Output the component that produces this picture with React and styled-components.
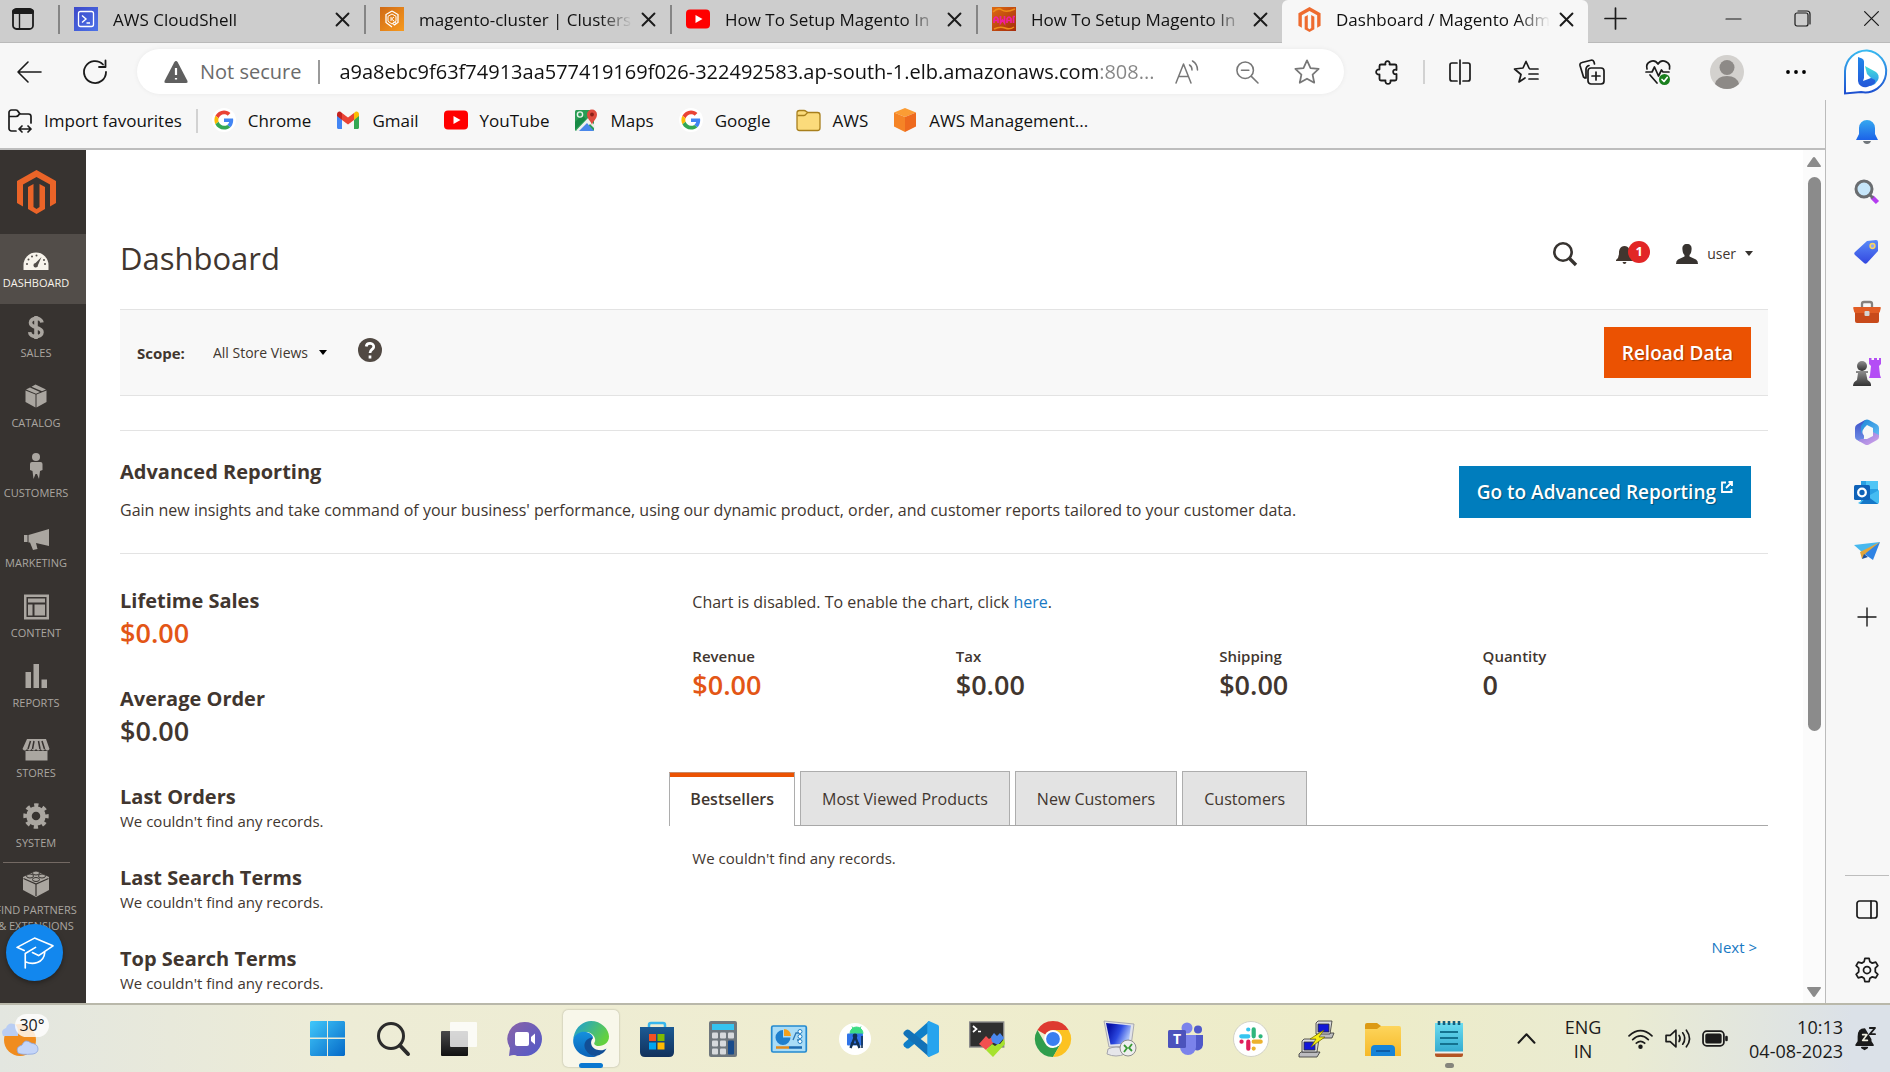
import React from "react";
import styled, { createGlobalStyle, css } from "styled-components";

const GlobalStyle = createGlobalStyle`
  *, *::before, *::after { box-sizing: border-box; }
  body { margin: 0; background: #fff; font-family: "Open Sans", "Noto Sans", sans-serif; color: #41362f; }
  button, input, select { font: inherit; color: inherit; }
  button { border: 0; background: none; padding: 0; cursor: pointer; }
  h1, h2, h3, p, ul, dl, dd { margin: 0; padding: 0; }
  ul { list-style: none; }
  a { color: #1979c3; text-decoration: none; }
  svg { display: block; flex: none; overflow: visible; }
`;

/* ---------- window frame ---------- */

const Screen = styled.div`
  display: flex;
  flex-direction: column;
  height: 100vh;
  overflow: hidden;
`;

const TabStrip = styled.div`
  display: flex;
  flex: none;
  height: 43px;
  background: #cdcdcd;
  color: #111;
  font-size: 17px;
  box-shadow: inset 0 -1px #bababa;
`;

const TabActions = styled.button`
  display: grid;
  place-items: center;
  width: 58px;
  padding: 0 12px 6px 0;
  flex: none;
`;

const BrowserTab = styled.div`
  display: flex;
  align-items: center;
  flex: 0 1 306px;
  min-width: 0;
  padding: 0 10px 5px 16px;
  position: relative;
  &::before {
    content: "";
    position: absolute;
    left: 0;
    top: 5px;
    width: 2px;
    height: 29px;
    background: #858585;
  }
  ${(p) => p.$active && css`
    background: #f7f7f7;
    border-radius: 6px 6px 0 0;
    &::before { display: none; }
  `}
`;

const TabTitle = styled.button`
  flex: 1;
  min-width: 0;
  margin-left: 15px;
  text-align: left;
  white-space: nowrap;
  overflow: hidden;
  mask-image: linear-gradient(90deg, #000 calc(100% - 36px), transparent calc(100% - 4px));
`;

const TabClose = styled.button`
  display: grid;
  place-items: center;
  width: 24px;
  height: 24px;
  flex: none;
`;

const NewTab = styled.button`
  display: grid;
  place-items: center;
  width: 54px;
  padding-bottom: 6px;
`;

const WindowButtons = styled.div`
  display: flex;
  margin-left: auto;
  margin-right: -16px;
  button {
    display: grid;
    place-items: center;
    width: 69px;
    padding-bottom: 6px;
  }
`;

const Toolbar = styled.div`
  display: flex;
  align-items: center;
  flex: none;
  height: 57px;
  padding-right: 1px;
  background: #f7f7f7;
`;

const ToolButton = styled.button`
  display: grid;
  place-items: center;
  flex: none;
  width: ${(p) => p.$w || 66}px;
  height: 44px;
`;

const AddressBar = styled.div`
  display: flex;
  align-items: center;
  flex: 1;
  min-width: 0;
  height: 45px;
  margin: 0 11px 0 5px;
  padding: 0 7px 0 27px;
  border-radius: 23px;
  background: #fff;
  box-shadow: 0 0 5px rgba(0, 0, 0, 0.06);
`;

const Security = styled.span`
  display: flex;
  align-items: center;
  gap: 12px;
  padding-right: 17px;
  border-right: 2px solid #9a9a9a;
  line-height: 24px;
  font-size: 20px;
  color: #6b6b6b;
  white-space: nowrap;
`;

const AddressInput = styled.input`
  flex: 1;
  min-width: 0;
  margin: 0 0 0 19px;
  padding: 0;
  border: 0;
  outline: 0;
  font-size: 20px;
  line-height: 28px;
  background: linear-gradient(90deg, #111 760px, #858585 760px);
  background-clip: text;
  -webkit-text-fill-color: transparent;
`;

const Divider = styled.span`
  flex: none;
  width: 2px;
  height: 24px;
  margin: 0 ${(p) => p.$gap}px;
  background: #d2d2d2;
`;

const BingButton = styled.button`
  margin-left: 14px;
`;

const Body = styled.div`
  display: flex;
  flex: 1;
  min-height: 0;
`;

const Viewport = styled.div`
  display: flex;
  flex-direction: column;
  flex: 1;
  min-width: 0;
`;

const Bookmarks = styled.nav`
  display: flex;
  align-items: center;
  flex: none;
  height: 50px;
  padding: 0 8px 7px;
  border-bottom: 2px solid #bdbdbd;
  background: #f7f7f7;
  font-size: 17px;
`;

const BookmarkList = styled.ul`
  display: flex;
  gap: 25px;
`;

const Bookmark = styled.button`
  display: flex;
  align-items: center;
  gap: 12px;
  color: #111;
  white-space: nowrap;
`;

const EdgeSidebar = styled.aside`
  display: flex;
  flex-direction: column;
  align-items: center;
  flex: none;
  width: 65px;
  padding: 2px 0 3px 17px;
  border-left: 1px solid #bbb;
  background: #f7f7f7;
`;

const SideButton = styled.button`
  display: grid;
  place-items: center;
  flex: none;
  width: 44px;
  height: ${(p) => p.$h || 60}px;
`;

const SideFooter = styled.div`
  margin-top: auto;
  border-top: 1px solid #bdbdbd;
  padding-top: 4px;
`;

/* ---------- admin page ---------- */

const Page = styled.div`
  display: flex;
  flex: 1;
  min-height: 0;
  background: #fff;
`;

const AdminMenu = styled.nav`
  position: relative;
  flex: none;
  width: 86px;
  overflow: hidden;
  background: #373330;
`;

const AdminLogo = styled.a`
  display: block;
  height: 84px;
  padding: 20px 0 0 17px;
`;

const MenuItem = styled.a`
  display: block;
  height: 70px;
  padding-top: ${(p) => (p.$tight ? 8 : 10)}px;
  background: ${(p) => (p.$active ? "#524d49" : "transparent")};
  color: ${(p) => (p.$active ? "#f7f3eb" : "#aaa6a0")};
`;

const MenuInner = styled.span`
  display: flex;
  flex-direction: column;
  align-items: center;
  gap: 3px;
  width: 72px;
  font-size: 11px;
  line-height: 16px;
  text-align: center;
  text-transform: uppercase;
  white-space: nowrap;
`;

const MenuRule = styled.hr`
  width: 67px;
  height: 1px;
  margin: -2px 0 0 3px;
  border: 0;
  background: #736963;
`;

const GuideButton = styled.button`
  position: absolute;
  left: 6px;
  bottom: 22px;
  display: grid;
  place-items: center;
  width: 57px;
  height: 57px;
  border-radius: 50%;
  background: #1287ee;
  box-shadow: 0 2px 5px rgba(0, 0, 0, 0.35);
`;

const Content = styled.main`
  flex: 1;
  min-width: 0;
  overflow: hidden;
  padding: 0 35px 0 34px;
`;

const PageHeader = styled.header`
  display: flex;
  align-items: center;
  justify-content: space-between;
  height: 159px;
  padding: 83px 15px 26px 0;
`;

const PageTitle = styled.h1`
  font-size: 31px;
  line-height: 50px;
  font-weight: 400;
`;

const HeaderTools = styled.div`
  display: flex;
  align-items: center;
  height: 40px;
  margin-bottom: 9px;
`;

const BellButton = styled.button`
  position: relative;
  width: 34px;
  margin: 0 26px 0 39px;
`;

const Badge = styled.span`
  position: absolute;
  right: 0;
  top: -3px;
  width: 22px;
  height: 22px;
  border-radius: 50%;
  background: #e22626;
  color: #fff;
  font-size: 13px;
  line-height: 21px;
  font-weight: 700;
  text-align: center;
`;

const UserButton = styled.button`
  display: flex;
  align-items: center;
  gap: 9px;
  font-size: 14px;
`;

const ScopeBar = styled.section`
  display: flex;
  align-items: center;
  height: 87px;
  padding: 0 17px;
  border: solid #e3e3e3;
  border-width: 1px 0;
  background: #f8f8f8;
`;

const ScopeLabel = styled.label`
  font-size: 15px;
  font-weight: 700;
  margin-right: 28px;
`;

const ScopeSelect = styled.span`
  display: flex;
  align-items: center;
  select {
    appearance: none;
    width: 106px;
    padding: 0;
    border: 0;
    background: transparent;
    font-size: 14px;
  }
`;

const HelpButton = styled.button`
  margin: 0 auto 5px 31px;
`;

const ActionButton = styled.button`
  display: flex;
  flex: none;
  gap: 5px;
  height: ${(p) => (p.$blue ? 52 : 51)}px;
  padding: 0 18px;
  align-items: center;
  background: ${(p) => (p.$blue ? "#007dbd" : "#eb5202")};
  color: #fff;
  font-size: 19px;
  font-weight: 600;
  text-shadow: 1px 1px 1px rgba(0, 0, 0, 0.35);
  svg { margin-bottom: 10px; }
`;

const ReportingBanner = styled.section`
  display: flex;
  justify-content: space-between;
  align-items: flex-start;
  height: 124px;
  margin-top: 34px;
  padding: 26px 17px 0 0;
  border: solid #e3e3e3;
  border-width: 1px 0;
  ${ActionButton} { margin-top: 9px; }
`;

const BannerTitle = styled.h2`
  font-size: 20px;
  line-height: 30px;
  font-weight: 700;
`;

const BannerText = styled.p`
  margin-top: 11px;
  font-size: 16px;
  line-height: 24px;
`;

const Columns = styled.div`
  display: grid;
  grid-template-columns: 1fr 2fr;
`;

const StatColumn = styled.div`
  display: flex;
  flex-direction: column;
  gap: 33px;
  padding-top: 33px;
`;

const StatTitle = styled.h2`
  font-size: 20px;
  line-height: 28px;
  font-weight: 700;
`;

const Price = styled.p`
  margin-bottom: 2px;
  font-size: 27px;
  line-height: 35px;
  font-weight: 600;
  color: ${(p) => (p.$accent ? "#e35616" : "#41362f")};
`;

const Empty = styled.p`
  font-size: 15px;
  line-height: 20px;
`;

const MainColumn = styled.div`
  padding-top: 36px;
`;

const ChartNotice = styled.p`
  padding-left: 23px;
  font-size: 16px;
  line-height: 24px;
`;

const Totals = styled.div`
  display: grid;
  grid-template-columns: repeat(4, 1fr);
  margin-top: 31px;
  padding: 0 22px 0 23px;
`;

const TotalLabel = styled.h3`
  font-size: 15px;
  line-height: 22px;
  font-weight: 600;
`;

const TabList = styled.div`
  display: flex;
  align-items: flex-end;
  gap: 5px;
  height: 55px;
  margin-top: 67px;
  border-bottom: 1px solid #a8a8a8;
`;

const PanelTab = styled.button`
  height: 54px;
  padding: 0 21px;
  border: 1px solid #adadad;
  border-bottom: 0;
  background: #e3e3e3;
  font-size: 16px;
  white-space: nowrap;
  ${(p) => p.$active && css`
    margin-bottom: -1px;
    padding: 0 20px 2px;
    border-top-color: #c98a68;
    background: #fff;
    box-shadow: inset 0 4px #eb5202;
    font-weight: 600;
  `}
`;

const TabPanel = styled.div`
  padding: 22px 11px 0 23px;
`;

const Pager = styled.p`
  margin-top: 69px;
  font-size: 15px;
  line-height: 20px;
  text-align: right;
`;

const ScrollTrack = styled.div`
  display: flex;
  flex-direction: column;
  align-items: center;
  flex: none;
  width: 22px;
  padding: 7px 0 6px;
  background: #fbfbfb;
`;

const ScrollThumb = styled.div`
  flex: 554;
  width: 13px;
  margin-top: 10px;
  border-radius: 7px;
  background: #8b8b8b;
`;

const ScrollRest = styled.div`
  flex: 256;
`;

/* ---------- task bar ---------- */

const Taskbar = styled.footer`
  display: flex;
  flex: none;
  height: 69px;
  border-top: 2px solid #b9b8aa;
  background: linear-gradient(90deg, #e3e6e0 0%, #edecd6 18%, #efedd0 45%, #edecc8 72%, #eaebd2 86%, #dbe1e8 98%);
  color: #1b1b1b;
`;

const Weather = styled.button`
  position: relative;
  flex: none;
  width: 294px;
`;

const Temperature = styled.span`
  position: absolute;
  left: 15px;
  top: 9px;
  width: 34px;
  height: 23px;
  border-radius: 12px;
  background: rgba(255, 255, 255, 0.8);
  font-size: 16px;
  line-height: 22px;
  text-align: center;
`;

const AppButton = styled.button`
  position: relative;
  display: grid;
  place-items: center;
  width: 66px;
  flex: none;
  ${(p) => p.$active && css`
    width: 56px;
    height: 57px;
    margin: 5px;
    border-radius: 5px;
    background: #f8f7ea;
    box-shadow: 0 0 2px rgba(0, 0, 0, 0.3);
  `}
  &::after {
    content: "";
    display: ${(p) => (p.$active || p.$running ? "block" : "none")};
    position: absolute;
    bottom: ${(p) => (p.$active ? -1 : 4)}px;
    width: ${(p) => (p.$active ? 24 : 9)}px;
    height: 5px;
    border-radius: 3px;
    background: ${(p) => (p.$active ? "#0a78d0" : "#85857c")};
  }
`;

const Tray = styled.div`
  display: flex;
  align-items: center;
  gap: 12px;
  margin-left: auto;
  padding-right: 14px;
  font-size: 18px;
  line-height: 24px;
`;

const Language = styled.button`
  width: 40px;
  margin: 0 13px 0 16px;
  text-align: center;
`;

const Clock = styled.button`
  margin-left: 10px;
  text-align: right;
`;

/* ---------- drawings ---------- */

const Line = ({ s = 24, c = "#1b1b1b", w = 1.7, vb = 24, children }) => (
  <svg width={s} height={s} viewBox={`0 0 ${vb} ${vb}`} fill="none" stroke={c} strokeWidth={w} strokeLinecap="round" strokeLinejoin="round" aria-hidden="true">{children}</svg>
);
const Fill = ({ s = 36, h, vb, children }) => (
  <svg width={s} height={h || s} viewBox={vb || `0 0 ${s} ${h || s}`} aria-hidden="true">{children}</svg>
);
const Grad = ({ id, a, b, x = 0, y = 1 }) => (
  <linearGradient id={id} x1="0" y1="0" x2={x} y2={y}><stop stopColor={a} /><stop offset="1" stopColor={b} /></linearGradient>
);

const MagentoMark = ({ s, h, c }) => (
  <svg width={s} height={h} viewBox="0 0 39 44" fill={c} aria-hidden="true">
    <path d="M19.500 0 39 11V33l-6 3.500V14.500L19.500 7 6 14.500v22L0 33V11z" />
    <path d="M11 17l5.500-3v23l3 2 3-2V14l5.500 3v22l-8.500 5L11 39z" />
  </svg>
);
const Cross = ({ s = 13, w = 1.8 }) => <Line s={s} vb={12} w={w}><path d="M.5.5l11 11M11.500.5l-11 11" /></Line>;
const YouTubeMark = ({ s = 24 }) => (
  <Fill s={s} h={s} vb="0 0 24 24"><rect y="2.500" width="24" height="19" rx="4" fill="#f00" /><path d="M9.500 8v8l7-4z" fill="#fff" /></Fill>
);
const GoogleG = () => (
  <svg width="24" height="24" viewBox="-6 -6 60 60" aria-hidden="true">
    <circle cx="24" cy="24" r="30" fill="#fff" />
    <path fill="#EA4335" d="M24 9.500c3.540 0 6.710 1.220 9.210 3.600l6.850-6.850C35.900 2.380 30.470 0 24 0 14.620 0 6.510 5.380 2.560 13.220l7.980 6.190C12.430 13.720 17.740 9.500 24 9.500z" />
    <path fill="#4285F4" d="M46.980 24.550c0-1.570-.15-3.090-.38-4.550H24v9.020h12.940c-.58 2.960-2.260 5.480-4.780 7.180l7.730 6c4.510-4.180 7.090-10.360 7.090-17.650z" />
    <path fill="#FBBC05" d="M10.530 28.590c-.48-1.450-.76-2.990-.76-4.590s.27-3.140.76-4.590l-7.980-6.190C.92 16.460 0 20.120 0 24c0 3.880.92 7.540 2.560 10.780l7.970-6.190z" />
    <path fill="#34A853" d="M24 48c6.480 0 11.930-2.130 15.890-5.810l-7.730-6c-2.150 1.450-4.920 2.300-8.160 2.300-6.260 0-11.570-4.220-13.470-9.910l-7.980 6.190C6.510 42.620 14.620 48 24 48z" />
  </svg>
);
const GmailMark = () => (
  <Fill s={24} vb="0 0 24 24">
    <path fill="#4285f4" d="M1 6.500v13c0 .8.600 1.500 1.500 1.500H6v-9.500z" /><path fill="#34a853" d="M18 21h3.500c.9 0 1.500-.7 1.500-1.500v-13l-5 5z" />
    <path fill="#ea4335" d="M6 12V5l6 4.500L18 5v7l-6 4.500z" /><path fill="#c5221f" d="M1 6.500V8l5 4V5L4.500 3.800C3 2.800 1 4 1 6.500z" /><path fill="#fbbc04" d="M23 6.500V8l-5 4V5l1.500-1.200C21 2.800 23 4 23 6.500z" />
  </Fill>
);
const MapsMark = () => (
  <Fill s={24} vb="0 0 24 24">
    <rect x="1" y="2" width="19" height="21" rx="1.500" fill="#2a9d55" /><path d="M1 21.500L12 11l-4-4-7 7z" fill="#188a45" />
    <path d="M2 22.500L15 9l6 9v3l-5-5-6 7H3z" fill="#f0f0ee" /><path d="M5 23l8-8 7 8z" fill="#4a87ea" />
    <circle cx="6" cy="6.500" r="2.600" fill="none" stroke="#e6f4ea" strokeWidth="1.400" />
    <path d="M18 17c-1-4-5-6-5-10.500a5 5 0 0110 0C23 11 19 13 18 17z" fill="#de4b3e" /><circle cx="18" cy="6.500" r="1.900" fill="#8c2018" />
  </Fill>
);
const FolderMark = () => (
  <Fill s={25} vb="0 0 25 24"><path d="M1 4.500A2.500 2.500 0 013.500 2H8c2 0 2.500 2 4 2h9.500A2.500 2.500 0 0124 6.500v13a2.500 2.500 0 01-2.500 2.500h-18A2.500 2.500 0 011 19.500z" fill="#fbdb7b" stroke="#a87f1c" strokeWidth="1.300" /><path d="M1.500 7H8c2 0 2.500-3 4-3" fill="none" stroke="#a87f1c" strokeWidth="1.300" /></Fill>
);
const CubeMark = () => (
  <Fill s={24} vb="0 0 24 24"><path d="M12 0l11 4.500L12 9 1 4.500z" fill="#fb9c34" /><path d="M1 4.500L12 9v15L1 18.500z" fill="#f58426" /><path d="M23 4.500L12 9v15l11-5.500z" fill="#ee6a1e" /></Fill>
);

const tabs = [
  { title: "AWS CloudShell", icon: <Fill s={24}><defs><Grad id="shell" a="#3c49c9" b="#4c72e8" x={1} /></defs><rect width="24" height="24" fill="url(#shell)" /><rect x="4.500" y="4.500" width="15" height="15" rx="2" fill="none" stroke="#fff" strokeWidth="1.300" /><path d="M8 8.500l4 3.500-4 3.500M12.500 16H16" fill="none" stroke="#fff" strokeWidth="1.400" /></Fill> },
  { title: "magento-cluster | Clusters", icon: <Fill s={24}><defs><Grad id="ecs" a="#cf6a16" b="#f79a1e" x={1} /></defs><rect width="24" height="24" fill="url(#ecs)" /><path d="M12 4l-6 3.500v8L12 20M12 4l6 3.500v8L14 18" fill="none" stroke="#fff" strokeWidth="1.300" /><path d="M12 7l-4 2.300v5L12 17l4-2.700v-5zM11 10v4M14 10l-2.500 2 2.500 2" fill="none" stroke="#fff" /><circle cx="14.500" cy="16.500" r="1.500" fill="none" stroke="#fff" /></Fill> },
  { title: "How To Setup Magento In", icon: <YouTubeMark /> },
  { title: "How To Setup Magento In", icon: <Fill s={24}><defs><Grad id="awr" a="#dd6a12" b="#a52c0d" x={1} /></defs><rect width="24" height="24" fill="url(#awr)" /><path d="M1 5q5-5 9-2t13-1M2 22q6-3 11-1t9-1" stroke="#ef8d18" strokeWidth="1.500" fill="none" /><path d="M2 16v-4q2-4 4 0v4M2 13.500h4M8.500 9v7l2-3 2 3V9M15 16v-4q2-4 4 0v4M15 13.500h4M21.500 16V9.500H23" stroke="#f01f9c" strokeWidth="1.700" fill="none" /></Fill> },
  { title: "Dashboard / Magento Adm", icon: <MagentoMark s={23} h={25} c="#ee6b2f" />, active: true },
];

const bookmarks = [
  ["Chrome", <GoogleG />], ["Gmail", <GmailMark />], ["YouTube", <YouTubeMark />], ["Maps", <MapsMark />],
  ["Google", <GoogleG />], ["AWS", <FolderMark />], ["AWS Management...", <CubeMark />],
];

const Star = <path d="M12 2l3 6.600 7 .8-5.200 4.800 1.400 7L12 17.700 5.800 21.200l1.400-7L2 9.400l7-.8z" />;
const toolbarIcons = [
  ["Split screen", <Line><path d="M9 3H4a2 2 0 00-2 2v14a2 2 0 002 2h5M15 3h5a2 2 0 012 2v14a2 2 0 01-2 2h-5M12 0v24" /></Line>],
  ["Favourites", <Line><path d="M15 8L12 1.500 9 8l-8.500 1L7 14.500 5 22l6-4M16 9h8M15 14h9M15 19h9" /></Line>],
  ["Collections", <Line><rect x="8" y="8" width="16" height="16" rx="3" /><path d="M16 12v8M12 16h8M5 18l-1.500-1L0 5.500A2.500 2.500 0 012 2.500l9-2.300a2.500 2.500 0 013 1.800l.5 2M6 18V9a4 4 0 013-3.500" /></Line>],
  ["Browser essentials", <Line><path d="M1 9C-1 2 8-2 12 4c4-6 13-2 11.500 5M0 12h6l2.500-5 4 9 3-6 1.500 2h6M4 15l7 8" /><circle cx="18.500" cy="19.500" r="5.500" fill="#1a7f1e" stroke="none" /><path d="M16 19.500l2 2 3.200-4" stroke="#fff" /></Line>],
];

const menuItems = [
  ["Dashboard", <><path d="M1.500 26V21a12.500 12.500 0 0125 0v5z" fill="currentColor" /><g fill="#524d49"><circle cx="5" cy="20" r="1" /><circle cx="6.500" cy="15.500" r="1" /><circle cx="10" cy="12.500" r="1" /><circle cx="14.500" cy="11.500" r="1" /><circle cx="22" cy="16" r="1" /><circle cx="23" cy="20" r="1" /><path d="M19.500 13l-3.500 8a2.300 2.300 0 11-2.500-2z" /></g></>],
  ["Sales", <path d="M20 8.500C19.500 3 8.500 3 8.500 8.800c0 6 11.500 3.500 11.500 9.400 0 6-12 6-12.300 0M14 2v23" fill="none" stroke="currentColor" strokeWidth="3.600" />],
  ["Catalog", <g fill="currentColor"><path d="M3.500 6.500l10 4V23.500L3.500 18zM24.500 6.500l-10 4V23.500L24.500 18zM4 5.500l4-2 10 4.500-4 1.700zM9.500 2.800L13.500.5l10.500 5-4 1.800z" /></g>],
  ["Customers", <g fill="currentColor"><circle cx="14" cy="3" r="4" /><path d="M10 8h8.500a2 2 0 012 2v6l-2.500 1-1 8-2-5h-1.500l-2 5-1-8-2.500-1v-6a2 2 0 012-2z" /></g>],
  ["Marketing", <path d="M2 11h3.500v7H2zM6.500 11L27 5v17l-13-3 1.500 6-4.500 1-3-7.500H6.500z" fill="currentColor" />],
  ["Content", <path fillRule="evenodd" d="M2 .5h25v25H2zM4.500 3v20h20V3zM6 4.500h17v4H6zM6 10.500h4.500v11H6zM12.500 10.500H23v11H12.500z" fill="currentColor" />],
  ["Reports", <path d="M3.500 8h5.500v16H3.500zM11.500 0H17v24h-5.500zM19.500 15.500H25V24h-5.500z" fill="currentColor" />],
  ["Stores", <g fill="currentColor"><path d="M3.500 17h22v9.500h-22z" /><path d="M5 5h19l3.500 10q-2 3-4.500 0-2 3-4.500 0-2 3-4.500 0-2 3-4.500 0-2 3-4.500 0-2 3-4.500 0z" /><path d="M8.500 7L6 15M12 7l-1.500 8M16.500 7l1.500 8M20 7l2.500 8" stroke="#373330" strokeWidth="1.500" /></g>],
  ["System", <g fill="none" stroke="currentColor"><circle cx="14" cy="12" r="7" strokeWidth="5.500" /><circle cx="14" cy="12" r="10.700" strokeWidth="4" strokeDasharray="4.200 4.200" strokeDashoffset="2.100" /></g>],
];

const appIcons = [
  ["Start", <Fill s={35}><defs><Grad id="win" a="#41c8fb" b="#0569c7" x={1} /></defs><path d="M1 0h16v16.500H0V1zM18 0h16l1 1v15.500H18zM0 18h17v17H1l-1-1zM18 18h17v16l-1 1H18z" fill="url(#win)" /></Fill>],
  ["Search", <Line s={34} vb={34} c="#2b2b2b" w={3}><circle cx="15" cy="14" r="12.500" /><path d="M24 23.500l8 8.500" strokeWidth="4" /></Line>],
  ["Task view", <Fill><defs><Grad id="tv" a="#4a4a4a" b="#111" /></defs><rect y="10" width="27" height="25" rx="1" fill="url(#tv)" /><rect x="9" y="1" width="27" height="25" rx="1" fill="#fff" opacity=".78" /></Fill>],
  ["Chat", <Fill><defs><Grad id="chat" a="#8a63a8" b="#5059c9" x={1} /></defs><path d="M18 1a17 17 0 010 34H10q-2-2-8 0l1-8A17 17 0 0118 1z" fill="url(#chat)" /><rect x="8" y="11" width="14" height="14" rx="2" fill="#fff" /><path d="M24 16l4-3.500v11L24 20z" fill="#fff" /></Fill>],
  ["Edge", <Fill><defs><Grad id="e1" a="#1a9bdc" b="#63d13f" x={1} y={0.5} /><Grad id="e2" a="#1590dd" b="#0b63b8" /></defs><path d="M.5 16C3 5 11 0 18 0c10 0 18 8 18 15.500 0 6-5 9.500-10 9.500-4 0-5.500-2-4.500-3.500C24 18 20 11 13 11 7 11 2 14 .5 18z" fill="url(#e1)" /><path d="M.3 18C3 11.500 9 10 14 11.300c4 1 6 3.700 6 5.700-5 2-7 6-5 11 1.500 4 5 7 9 7-2 1-4 1-6 1C8 36-1 28 .3 18z" fill="url(#e2)" /><path d="M18 16.500c-6 2-8 7-5.500 12C15 33 19 35 23 35c5-1 9-4 10.500-7.500C31 29.500 27 29.800 23 28.500c-5-2-6.500-8-3-11.500z" fill="#124f96" /></Fill>, { $active: true }],
  ["Store", <Fill><defs><Grad id="st" a="#1b5a94" b="#12315c" /></defs><path d="M10 7V4q0-2 2-2h12q2 0 2 2v3" fill="none" stroke="#37b6ee" strokeWidth="2.500" /><path d="M1 6h34v25q0 5-5 5H6q-5 0-5-5z" fill="url(#st)" /><path d="M10 13h7v7h-7z" fill="#f25022" /><path d="M18.500 13h7v7h-7z" fill="#7fba00" /><path d="M10 21.500h7v7h-7z" fill="#00a4ef" /><path d="M18.500 21.500h7v7h-7z" fill="#ffb900" /></Fill>],
  ["Calculator", <Fill><rect x="4" width="28" height="36" rx="2" fill="#6f777d" /><rect x="7" y="3" width="22" height="6" fill="#35c3f0" /><g fill="#d7dadd"><rect x="7" y="11.500" width="6" height="6" rx="1" /><rect x="15" y="11.500" width="6" height="6" rx="1" /><rect x="23" y="11.500" width="6" height="6" rx="1" /><rect x="7" y="19.500" width="6" height="6" rx="1" /><rect x="15" y="19.500" width="6" height="6" rx="1" /><rect x="7" y="27.500" width="6" height="6" rx="1" /><rect x="15" y="27.500" width="6" height="6" rx="1" /></g><rect x="23" y="19.500" width="6" height="14" rx="1" fill="#194b8a" /></Fill>],
  ["Control Panel", <Fill><rect x=".7" y="5" width="34.600" height="26" rx="1.500" fill="#a9dcf7" stroke="#2389cf" strokeWidth="1.700" /><path d="M12 9a7.500 7.500 0 107.500 7.500H12z" fill="#1f7fce" /><path d="M13 8v7h7a7 7 0 00-7-7z" fill="#f3a01d" /><path d="M22 19l3-7h3M26 19h3" stroke="#2f78b3" strokeWidth="1.300" fill="none" /><g fill="#fff" stroke="#2380c4"><circle cx="29" cy="10.500" r="2" /><circle cx="29" cy="15.500" r="2" /><circle cx="29" cy="20.500" r="2" /></g><path d="M5 26.500h13" stroke="#e18a1c" strokeWidth="2.500" /><path d="M18 26.500h13" stroke="#1e6bb0" strokeWidth="2.500" /></Fill>],
  ["Android Studio", <Fill><circle cx="18" cy="18" r="16" fill="#fff" /><path d="M13 12.500a6.500 6.500 0 0113 0zM15 5.500l2 3M24 5.500l-2 3" fill="#3ddc84" stroke="#3ddc84" /><rect x="10" y="12.500" width="16" height="12" rx="1" fill="#2f74e8" /><path d="M18 15.500L13.500 27M18 15.500L22.500 27" stroke="#123052" strokeWidth="2.400" fill="none" /><path d="M14 22q4 2.500 8 0M25 15v12" stroke="#123052" strokeWidth="1.600" fill="none" /><circle cx="18" cy="15" r="2.400" fill="#123052" /></Fill>],
  ["VS Code", <Fill><path d="M26 0L1 22q-1.500 1.800 0 3.300L3 27q1.500 1 3.300 0L29 9z" fill="#0f7fc8" /><path d="M26 36L1 14q-1.500-1.800 0-3.300L3 9q1.500-1 3.300 0L29 27z" fill="#1272b8" /><path d="M26 0l9 4q1 .6 1 1.700v24.600q0 1.100-1 1.700l-9 4q-1.700-.4-1.700-2.300V2.300Q24.300.4 26 0z" fill="#27a4ee" /></Fill>],
  ["MobaXterm", <Fill><rect x=".7" y="1" width="34" height="25" fill="#2f2f2f" stroke="#8a8a8a" strokeWidth="1.400" /><path d="M4 5l3.500 3L4 11M9 10.500h3" stroke="#fff" strokeWidth="1.700" fill="none" /><path d="M10 23l7-8 3 3 3-2 3 4-9 9z" fill="#f25050" /><path d="M22 16l3-4 3 3 3-3 4 5-6 7-6-3z" fill="#4a88ee" /><path d="M17 29l6-6 3 2 3-2 2 0 4-5 1 5-12 13z" fill="#a6e22e" /></Fill>],
  ["Chrome", <Fill><path d="M18 0a18 18 0 0115.600 9H18a9 9 0 00-7.800 4.500L2.400 9A18 18 0 0118 0z" fill="#de3a30" /><path d="M2.400 9l7.800 13.500A9 9 0 0018 27l7.800-4.500L18 36A18 18 0 012.400 9z" fill="#2f9e4c" /><path d="M33.600 9A18 18 0 0118 36l7.800-13.500A9 9 0 0018 9z" fill="#fcc221" /><circle cx="18" cy="18" r="8.700" fill="#fff" /><circle cx="18" cy="18" r="6.900" fill="#3a7ff0" /></Fill>],
  ["Remote Desktop", <Fill><defs><linearGradient id="rd" x1="0" y1="0" x2="1" y2=".4"><stop offset=".2" stopColor="#0712a8" /><stop offset=".6" stopColor="#2b49e0" /><stop offset="1" stopColor="#a9c0fa" /></linearGradient></defs><path d="M7 28q8-4 16 0l1 5q-9 4-18 0z" fill="#e6e6ea" stroke="#a5a5ad" /><path d="M3 0l30 3-3 22-22 1z" fill="#e0e2ea" stroke="#9a9aa5" strokeWidth=".8" /><path d="M5 2l25 2.500-2.500 18L9.500 23.500z" fill="url(#rd)" /><circle cx="27" cy="27" r="8" fill="#eee" stroke="#8d8d8d" /><path d="M23 24l3 3-3 4M31 23l-3 4 3 3" fill="none" stroke="#3a9a35" strokeWidth="1.800" /></Fill>],
  ["Teams", <Fill><circle cx="20" cy="7" r="5.500" fill="#7b83eb" /><circle cx="31" cy="8.500" r="4" fill="#5059c9" /><path d="M23 14h13v10a6 6 0 01-8 5z" fill="#5059c9" /><path d="M13 14h16v12a8 8 0 01-16 0z" fill="#7b83eb" /><rect x="1" y="9" width="18" height="18" rx="1.500" fill="#4b53bc" /><text x="10" y="23" fill="#fff" fontFamily="Open Sans" fontWeight="700" fontSize="14" textAnchor="middle">T</text></Fill>],
  ["Slack", <Fill><circle cx="18" cy="18" r="17.500" fill="#fff" stroke="#c9c9c0" strokeWidth=".8" /><g strokeWidth="4.200" strokeLinecap="round"><path d="M15.300 8.500v0M15.300 8.500h-.1M8.300 15.300h7" stroke="#36c5f0" /><path d="M20.700 8.300v7M27.500 15.300h.1" stroke="#2eb67d" /><path d="M20.700 20.700h7M20.700 27.500v.1" stroke="#ecb22e" /><path d="M15.300 20.700v7M8.500 20.700h.1" stroke="#e01e5a" /></g></Fill>],
  ["PuTTY", <Fill><g stroke="#333" strokeWidth=".8"><path d="M17 14l2-2h16l-2 5H17z" fill="#bdbdc0" /><path d="M17 2l2-2h14l-2 13H17z" fill="#d9d9dc" /><path d="M19 3h11v8H19z" fill="#1216d8" /><path d="M0 33l2-2h19l-3 5H0z" fill="#bdbdc0" /><path d="M3 20l2-2h15l-2 13H3z" fill="#d9d9dc" /><path d="M5 21h11v8H5z" fill="#1216d8" /></g><path d="M25 9l-14 9h6l-5 8 14-10h-6z" fill="#f7ee14" stroke="#6b6400" strokeWidth=".7" /></Fill>],
  ["File Explorer", <Fill><defs><Grad id="fe" a="#fdd55c" b="#f6b928" /></defs><path d="M0 4q0-2 2-2h10l4 3v9H0z" fill="#dc9a14" /><path d="M0 8h12l4-3h18q2 0 2 2v28H0z" fill="url(#fe)" /><path d="M6 35v-7q0-4 4-4h16q4 0 4 4v7z" fill="#1684d8" /><path d="M11 30h14" stroke="#0c5da8" strokeWidth="2" /></Fill>],
  ["Notepad", <Fill><defs><Grad id="np" a="#6bdcf0" b="#35acd0" /></defs><path d="M4 31h28v3q0 2-2 2H6q-2 0-2-2z" fill="#b35424" /><path d="M4 30h28v2.500H4z" fill="#f1f1ec" /><rect x="4" y="2" width="28" height="28.500" fill="url(#np)" /><path d="M9 11h18M9 17h18M9 23h18" stroke="#14728f" strokeWidth="2" /><path d="M8 0v4M13 0v4M18 0v4M23 0v4M28 0v4" stroke="#155e7c" strokeWidth="2.600" /></Fill>, { $running: true }],
];

const sideIcons = [
  ["Notifications", <Fill s={24}><defs><Grad id="bl" a="#35a8f0" b="#1c62e8" /></defs><path d="M12 0a8 8 0 018 8v6l3 6H1l3-6V8a8 8 0 018-8z" fill="url(#bl)" /><path d="M8 21h8q-1 3-4 3t-4-3z" fill="#6f757a" /></Fill>],
  ["Search", <Fill s={26}><path d="M18 18l5.500 5.500" stroke="#b43df0" strokeWidth="4.500" /><path d="M15 15l4 4" stroke="#6a6d70" strokeWidth="3" /><circle cx="10" cy="10" r="8" fill="#c6e6fa" stroke="#6a6d70" strokeWidth="3" /></Fill>],
  ["Shopping", <Fill s={25}><defs><Grad id="tg" a="#5b8cf8" b="#3247e0" /></defs><path d="M13 1l9-1q2 0 2 2v9L13 23q-1.500 1.500-3 0L1 15q-1.500-1.500 0-3z" fill="url(#tg)" /><circle cx="18.500" cy="6" r="2.400" fill="#8aa4ff" stroke="#fbd65a" strokeWidth="1.500" /></Fill>],
  ["Tools", <Fill s={28}><path d="M9 10V6q0-2 2-2h6q2 0 2 2v4" fill="none" stroke="#85807d" strokeWidth="2.300" /><rect x="2" y="13" width="24" height="12" rx="2" fill="#c84a1b" /><path d="M1 9h26q1 0 .8 1l-1 4q-.3 1-1.800 1H3q-1.500 0-1.800-1l-1-4Q0 9 1 9z" fill="#e25d25" /><rect x="11.500" y="13" width="5" height="5" rx="1" fill="#d5d5d5" /></Fill>],
  ["Games", <Fill s={28}><defs><Grad id="pw" a="#8e8e8e" b="#333" /></defs><path d="M16 0h2.500v2H21V0h3v2h2V0h2v6l-2 2 1 9 1 3H16l1-3 1-9-2-2z" fill="#b44df5" /><circle cx="9" cy="8" r="5" fill="url(#pw)" /><path d="M3 13h12v2h-2l1.500 7q4 2 3.500 6H0q0-4 4-6l1-7H3z" fill="url(#pw)" /></Fill>],
  ["Microsoft 365", <Fill s={26}><defs><Grad id="m1" a="#3c50c8" b="#6f8fe6" /><Grad id="m2" a="#8a7be0" b="#d3a4e8" x={1} /><Grad id="m3" a="#1f86d8" b="#63bdf4" x={1} /></defs><path d="M11 1L3 5.500Q1 6.500 1 9v9q0 2 2 3l3 1.500 4-3V9z" fill="url(#m1)" /><path d="M11 1q2-1 4 0l8 4.500q2 1 2 3.500v8l-6-3V9l-6-3-3 3-3 6V7z" fill="url(#m3)" /><path d="M25 16v2q0 2-2 3l-8 4.500q-2 1-4 0L4 21.500l3-1.500 6 0 6-3 0-4z" fill="url(#m2)" /><circle cx="13" cy="13" r="4.600" fill="#f7f7f7" /></Fill>],
  ["Outlook", <Fill s={25}><path d="M7 1h17v23H7z" fill="#28a0e4" /><path d="M12 1h12v8H12z" fill="#50c5f5" /><path d="M4 23l12-8 9-5v12q0 2-2 2H6z" fill="#45bdf2" /><path d="M13 16l11 8H6z" fill="#1577c8" /><rect y="5" width="16" height="15" rx="1.500" fill="#0f62b8" /><circle cx="8" cy="12.500" r="3.800" fill="none" stroke="#fff" strokeWidth="2.300" /></Fill>],
  ["Drop", <Fill s={26}><path d="M0 6l26-3L9 14z" fill="#47b8ee" /><path d="M26 3l-7 18-10-7z" fill="#2f83e4" /><path d="M26 3L6 13l2 7 4-6z" fill="#e2a53a" /><path d="M8 20l2-5 4 3z" fill="#1b4f9c" /></Fill>],
];

const totals = [["Revenue", "$0.00", true], ["Tax", "$0.00"], ["Shipping", "$0.00"], ["Quantity", "0"]];
const panels = ["Bestsellers", "Most Viewed Products", "New Customers", "Customers"];
const emptyText = "We couldn't find any records.";
const gearPath = "M10.200 2h3.600l.7 3 2 1.100 3-.9 1.800 3.100-2.200 2.100v3.200l2.200 2.100-1.800 3.100-3-.9-2 1.100-.7 3h-3.600l-.7-3-2-1.100-3 .9-1.800-3.100 2.200-2.100v-3.200L2.700 8.300l1.800-3.100 3 .9 2-1.100z";

/* ---------- regions ---------- */

function BrowserChrome() {
  return (
    <>
      <TabStrip>
        <TabActions aria-label="Tab actions"><Line s={22} vb={22} w={1.8}><rect x="1" y="1" width="20" height="20" rx="3.500" /><path d="M2.500 3.500h17" strokeWidth="5" /><path d="M7.500 6v14.500" strokeWidth="1.400" /></Line></TabActions>
        {tabs.map((t, i) => (
          <BrowserTab key={i} $active={t.active}>
            {t.icon}
            <TabTitle>{t.title}</TabTitle>
            <TabClose aria-label="Close tab"><Cross /></TabClose>
          </BrowserTab>
        ))}
        <NewTab aria-label="New tab"><Line s={21} vb={20} w={1.6}><path d="M10 0v20M0 10h20" /></Line></NewTab>
        <WindowButtons>
          <button aria-label="Minimise"><Line s={15} vb={15} w={1.2}><path d="M0 8h15" /></Line></button>
          <button aria-label="Restore"><Line s={15} vb={15} w={1.2}><rect x="0" y="2" width="13" height="13" rx="2" /><path d="M3 0h9a3 3 0 013 3v10" /></Line></button>
          <button aria-label="Close window"><Cross s={15} w={1} /></button>
        </WindowButtons>
      </TabStrip>
      <Toolbar>
        <ToolButton $w={58} aria-label="Back"><Line w={1.6}><path d="M24 12H1M11 2L1 12l10 10" /></Line></ToolButton>
        <ToolButton $w={74} aria-label="Refresh"><Line w={1.8}><path d="M23 12A11 11 0 1120 4.500M22.500.5V7H16" /></Line></ToolButton>
        <AddressBar>
          <Security><Fill s={24} vb="0 0 24 24"><path d="M12 1q1 0 1.700 1.200L23.500 21q.7 2-1.300 2H1.800q-2 0-1.300-2L10.300 2.200Q11 1 12 1z" fill="#5f5f5f" /><path d="M12 8v7M12 18v1.500" stroke="#fff" strokeWidth="2.200" /></Fill>Not secure</Security>
          <AddressInput aria-label="Address" defaultValue="a9a8ebc9f63f74913aa577419169f026-322492583.ap-south-1.elb.amazonaws.com:808..." />
          <ToolButton $w={60} aria-label="Read aloud"><Line c="#777" w={1.5}><path d="M1 23L8.500 4 16 23M4 16.500h9M14.500 5q2.500 1.500 2.500 5M17.500 1q5 3 5 9" /></Line></ToolButton>
          <ToolButton $w={60} aria-label="Zoom out"><Line s={22} c="#777"><circle cx="10" cy="10" r="9" /><path d="M17 17l7 7M6 10h8" /></Line></ToolButton>
          <ToolButton $w={60} aria-label="Add to favourites"><Line s={28} c="#777" w={1.5}>{Star}</Line></ToolButton>
        </AddressBar>
        <ToolButton aria-label="Extensions"><Line w={1.8}><path d="M5 4.500h4.500C8 0 15 0 13.500 4.500H19a1.500 1.500 0 011.500 1.500v4C16 8 16 15.500 20.500 14v5a1.500 1.500 0 01-1.500 1.500h-4.500c1 4.500-6 4.500-5 0H5A1.500 1.500 0 013.500 19v-4.500c-4.500.5-4.500-5.500 0-5V6A1.500 1.500 0 015 4.500z" /></Line></ToolButton>
        <Divider $gap={2} />
        {toolbarIcons.map(([name, icon]) => <ToolButton key={name} aria-label={name}>{icon}</ToolButton>)}
        <ToolButton $w={72} aria-label="Profile"><Fill s={34}><circle cx="17" cy="17" r="17" fill="#d3d1ce" /><circle cx="17" cy="12.500" r="7.500" fill="#8d8a87" /><path d="M5 29q2-8 12-8t12 8a17 17 0 01-24 0z" fill="#8d8a87" /></Fill></ToolButton>
        <ToolButton aria-label="Settings and more"><Fill s={20}><circle cx="2" cy="10" r="1.900" /><circle cx="10" cy="10" r="1.900" /><circle cx="18" cy="10" r="1.900" /></Fill></ToolButton>
        <BingButton aria-label="Discover"><Fill s={46}><defs><Grad id="bg" a="#39b9f0" b="#1d4fd0" /><Grad id="bb" a="#1f86ea" b="#2557d8" /><Grad id="bc" a="#45e0d8" b="#2a8cf0" /></defs><path d="M24 1.500a21 21 0 11-6 41.500L2 44.500V22A21.500 21.500 0 0124 1.500z" fill="#fff" stroke="url(#bg)" strokeWidth="2" /><path d="M22 17l11 6q4 3 2 8l-3 4q-5 3-9 2l5-8-4-4z" fill="url(#bc)" /><path d="M15 8l4 1.500q2 1 2 3V29l-1 3 8-3 4 2q1 2-1 4l-7 3q-3 1-6-1-3-2-3-5z" fill="url(#bb)" /></Fill></BingButton>
      </Toolbar>
    </>
  );
}

function AdminSidebar() {
  return (
    <AdminMenu aria-label="Admin">
      <AdminLogo href="#" aria-label="Magento Admin"><MagentoMark s={39} h={44} c="#ea6428" /></AdminLogo>
      {menuItems.map(([label, icon]) => (
        <MenuItem key={label} href="#" $active={label === "Dashboard"}>
          <MenuInner><Fill s={28}>{icon}</Fill>{label}</MenuInner>
        </MenuItem>
      ))}
      <MenuRule />
      <MenuItem href="#" $tight>
        <MenuInner>
          <Fill s={28}><path d="M1 6l13-6 13 6v13l-13 7-13-7z" fill="currentColor" /><path d="M1.500 7.500L14 13l12.500-5.500M14 13v12" stroke="#373330" strokeWidth="1.200" fill="none" /><g fill="#aaa6a0" stroke="#373330" strokeWidth="1"><ellipse cx="14" cy="2" rx="3.500" ry="2" /><ellipse cx="8" cy="5" rx="3.500" ry="2" /><ellipse cx="20" cy="5" rx="3.500" ry="2" /><ellipse cx="14" cy="8.500" rx="3.500" ry="2" /></g></Fill>
          <span>Find Partners<br />&amp; Extensions</span>
        </MenuInner>
      </MenuItem>
      <GuideButton aria-label="Guides"><Line s={37} vb={36} c="#fff" w={1.6}><path d="M8 16l-7-3L18 4l18 7.500L22 21l-6-3M9 33V19l10-6M9 27c7 3 18 2 19-9" /></Line></GuideButton>
    </AdminMenu>
  );
}

function Dashboard() {
  return (
    <Content>
      <PageHeader>
        <PageTitle>Dashboard</PageTitle>
        <HeaderTools>
          <button aria-label="Search"><Line s={24} c="#373330" w={2.6}><circle cx="10" cy="10" r="8.700" /><path d="M16.500 16.500l6.500 6.500" strokeWidth="3.400" strokeLinecap="butt" /></Line></button>
          <BellButton aria-label="Notifications, 1 unread"><Fill s={18} h={20} vb="0 0 18 20"><path d="M8.500 2C13 2 14 6 14 9q0 5 3 7v1H0v-1q3-2 3-7c0-3 1-7 5.500-7zM6.500 18h4q-.5 2-2 2t-2-2z" fill="#41362f" /></Fill><Badge>1</Badge></BellButton>
          <UserButton>
            <Fill s={22} h={20} vb="0 0 22 20"><path d="M11 0c4 0 5 3 4.500 6-.3 3-1 4-2 5v1.500l6.500 3q2 1 2 4.500H0q0-3.500 2-4.500l6.500-3V11c-1-1-1.700-2-2-5C6 3 7 0 11 0z" fill="#373330" /></Fill>
            user
            <Fill s={8} h={5} vb="0 0 8 5"><path d="M0 0h8L4 5z" fill="#373330" /></Fill>
          </UserButton>
        </HeaderTools>
      </PageHeader>
      <ScopeBar>
        <ScopeLabel htmlFor="scope">Scope:</ScopeLabel>
        <ScopeSelect>
          <select id="scope"><option>All Store Views</option></select>
          <Fill s={8} h={5} vb="0 0 8 5"><path d="M0 0h8L4 5z" /></Fill>
        </ScopeSelect>
        <HelpButton aria-label="Help"><Fill s={24}><circle cx="12" cy="12" r="12" fill="#514943" /><path d="M8.200 8.500c.5-4.500 8-4 7.500.5-.3 2.500-3.700 2.500-3.700 6M12 17.500v3" fill="none" stroke="#fff" strokeWidth="2.700" /></Fill></HelpButton>
        <ActionButton>Reload Data</ActionButton>
      </ScopeBar>
      <ReportingBanner>
        <div>
          <BannerTitle>Advanced Reporting</BannerTitle>
          <BannerText>Gain new insights and take command of your business' performance, using our dynamic product, order, and customer reports tailored to your customer data.</BannerText>
        </div>
        <ActionButton $blue>Go to Advanced Reporting<Fill s={12} vb="0 0 12 12"><path d="M5 1.500H1v9.500h9.500V8M7.500 1H11v4M11 1L5 7" fill="none" stroke="#fff" strokeWidth="1.800" /></Fill></ActionButton>
      </ReportingBanner>
      <Columns>
        <StatColumn>
          <section><StatTitle>Lifetime Sales</StatTitle><Price $accent>$0.00</Price></section>
          <section><StatTitle>Average Order</StatTitle><Price>$0.00</Price></section>
          {["Last Orders", "Last Search Terms", "Top Search Terms"].map((t) => (
            <section key={t}><StatTitle>{t}</StatTitle><Empty>{emptyText}</Empty></section>
          ))}
        </StatColumn>
        <MainColumn>
          <ChartNotice>Chart is disabled. To enable the chart, click <a href="#">here</a>.</ChartNotice>
          <Totals>
            {totals.map(([label, value, accent]) => (
              <div key={label}><TotalLabel>{label}</TotalLabel><Price $accent={accent}>{value}</Price></div>
            ))}
          </Totals>
          <TabList role="tablist">
            {panels.map((p, i) => <PanelTab key={p} role="tab" aria-selected={i === 0} $active={i === 0}>{p}</PanelTab>)}
          </TabList>
          <TabPanel role="tabpanel">
            <Empty>{emptyText}</Empty>
            <Pager><a href="#">Next &gt;</a></Pager>
          </TabPanel>
        </MainColumn>
      </Columns>
    </Content>
  );
}

function WindowsTaskbar() {
  return (
    <Taskbar>
      <Weather>
        <Fill s={60} h={65} vb="0 0 60 65"><circle cx="20" cy="34" r="16" fill="#f08c1e" /><path d="M3 30q-3-6 3-8 2-6 8-4 5 2 4 12z" fill="#b9cdf3" /><path d="M18 47q-3-6 4-8 3-7 9-2 7 1 7 6 0 4-5 5-12 1-15-1z" fill="#c4d5f8" stroke="#8ba6e0" strokeWidth=".8" /></Fill>
        <Temperature>30°</Temperature>
      </Weather>
      {appIcons.map(([name, icon, state]) => <AppButton key={name} aria-label={name} {...state}>{icon}</AppButton>)}
      <Tray>
        <button aria-label="Hidden icons"><Line s={17} vb={16} w={1.9}><path d="M.5 12L8 4l7.500 8" /></Line></button>
        <Language>ENG<br />IN</Language>
        <Line s={25} w={1.7}><path d="M1 9.500q11-10 22 0M4.500 13q7.500-7 15 0M8 16.500q4-3.500 8 0" /><circle cx="12" cy="20" r="1.300" fill="#1b1b1b" /></Line>
        <Line s={25} w={1.6}><path d="M1 9v6h4l5.500 5V4L5 9zM13.500 9q2 3 0 6M17 6.500q4 5.500 0 11M20.500 4q6 8 0 16" /></Line>
        <Line s={25} w={1.7}><rect x="1" y="5" width="20" height="14" rx="3.500" /><rect x="4" y="8" width="14" height="8" rx="1" fill="#1b1b1b" /><path d="M23.500 10.500v3" strokeWidth="2.500" /></Line>
        <Clock>10:13<br />04-08-2023</Clock>
        <Line s={21} vb={22} w={1.5}><path d="M10 1C4 1 3.500 5 3.500 9v5L1 18h18l-2.500-4v-2z" fill="#1b1b1b" /><path d="M7 20.500h6l-3 2z" fill="#1b1b1b" /><path d="M8 7h4.500L8 13h5" stroke="#f0efe0" strokeWidth="1.700" /><path d="M15.500 0H21l-5.500 6.500H21" strokeWidth="1.900" /></Line>
      </Tray>
    </Taskbar>
  );
}

export default function App() {
  return (
    <Screen>
      <GlobalStyle />
      <BrowserChrome />
      <Body>
        <Viewport>
          <Bookmarks aria-label="Favourites">
            <Bookmark><Line s={24} w={1.7}><path d="M8 22H3.500A2.500 2.500 0 011 19.500v-16A2.500 2.500 0 013.500 1H8q1.500 0 2.500 2t2.500 2h7.500A2.500 2.500 0 0123 7.500V14M1 7.500h7q2 0 3.500-2.500M11 20h12M14 17l-3 3 3 3M20 17l3 3-3 3" /></Line>Import favourites</Bookmark>
            <Divider $gap={14} />
            <BookmarkList>
              {bookmarks.map(([label, icon]) => <li key={label}><Bookmark>{icon}{label}</Bookmark></li>)}
            </BookmarkList>
          </Bookmarks>
          <Page>
            <AdminSidebar />
            <Dashboard />
            <ScrollTrack aria-hidden="true">
              <Fill s={14} h={10} vb="0 0 14 10"><path d="M7 0q.7 0 1.200.8L14 9q.2 1-1 1H1Q-.2 10 0 9L5.800.8Q6.300 0 7 0z" fill="#8b8b8b" /></Fill>
              <ScrollThumb />
              <ScrollRest />
              <Fill s={14} h={10} vb="0 0 14 10"><path d="M7 10q.7 0 1.200-.8L14 1q.2-1-1-1H1Q-.2 0 0 1l5.800 8.200Q6.300 10 7 10z" fill="#8b8b8b" /></Fill>
            </ScrollTrack>
          </Page>
        </Viewport>
        <EdgeSidebar>
          {sideIcons.map(([name, icon]) => <SideButton key={name} aria-label={name}>{icon}</SideButton>)}
          <SideButton $h={70} aria-label="Customise"><Line s={18} vb={18} w={1.4}><path d="M9 0v18M0 9h18" /></Line></SideButton>
          <SideFooter>
            <SideButton aria-label="Show sidebar"><Line s={22} vb={22}><rect x="1" y="2" width="20" height="17" rx="2.500" /><path d="M15 2v17" /></Line></SideButton>
            <SideButton aria-label="Settings"><Line s={28}><path d={gearPath} strokeWidth="1.500" /><circle cx="12" cy="12" r="3" strokeWidth="1.500" /></Line></SideButton>
          </SideFooter>
        </EdgeSidebar>
      </Body>
      <WindowsTaskbar />
    </Screen>
  );
}
